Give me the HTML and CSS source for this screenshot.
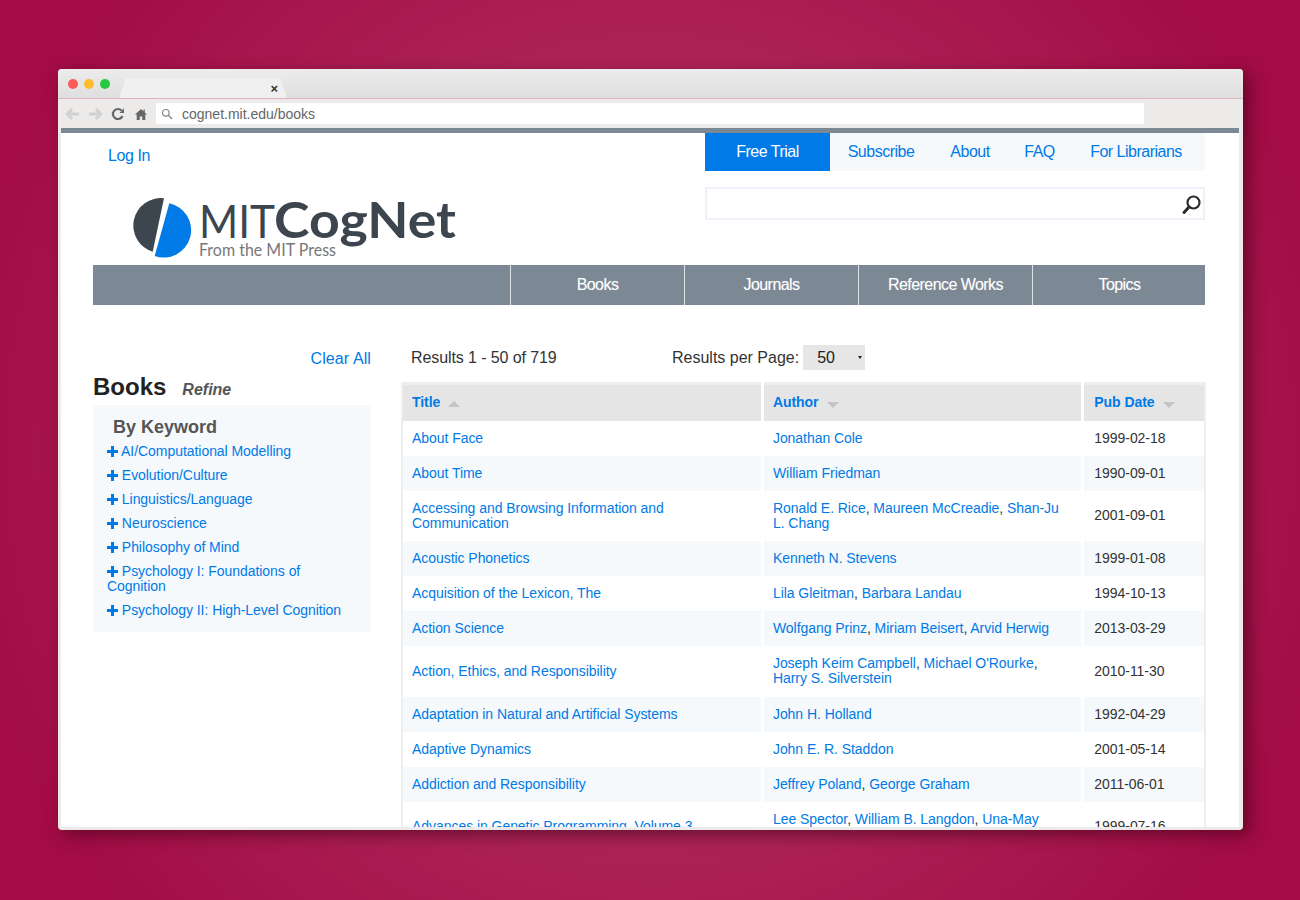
FILE: index.html
```html
<!DOCTYPE html>
<html lang="en">
<head>
    <meta charset="UTF-8">
    <title>MIT CogNet - Books</title>
    <link rel="stylesheet" href="styles.css">
</head>
<body>
    <div class="browser">
        <div class="titlebar">
            <div class="dots">
                <span class="dot dot-red"></span>
                <span class="dot dot-yellow"></span>
                <span class="dot dot-green"></span>
            </div>
            <div class="tab"><span class="tab-close">×</span></div>
        </div>
        <div class="toolbar">
            <svg class="tool" width="16" height="14" viewBox="0 0 16 14"><path d="M7 2 2.500 7 7 12M3 7h11" fill="none" stroke="#d2d2d2" stroke-width="3"/></svg>
            <svg class="tool" width="16" height="14" viewBox="0 0 16 14"><path d="M9 2l4.500 5L9 12M13 7H2" fill="none" stroke="#d2d2d2" stroke-width="3"/></svg>
            <svg class="tool" width="14" height="14" viewBox="0 0 14 14"><path d="M11.500 9A5 5 0 1 1 10.500 3.500" fill="none" stroke="#666" stroke-width="2.200"/><path d="M8.500 6H13V1.200z" fill="#666"/></svg>
            <svg class="tool" width="12" height="12" viewBox="0 0 12 12"><path d="M6 1 0 6.500h1.700V12h3V8.500h2.600V12h3V6.500H12L9.800 4.500V1.500H8.500v1.800z" fill="#666"/></svg>
            <div class="address">
                <svg width="12" height="12" viewBox="0 0 12 12"><circle cx="4.800" cy="4.800" r="3.300" fill="none" stroke="#888" stroke-width="1.200"/><path d="M7.300 7.300 11 11" stroke="#888" stroke-width="1.500"/></svg>
                <span>cognet.mit.edu/books</span>
            </div>
        </div>

        <div class="viewport">
            <header class="site-header">
                <div class="header-left">
                    <a class="login" href="#">Log In</a>
                    <svg class="logo" width="326" height="64" viewBox="0 0 326 64">
                        <path d="M31 1.300 19.700 54.700A27.400 27.400 0 0 1 31 1.300Z" fill="#3d464e"/>
                        <path d="M36.300 6.300 21.700 59A27.400 27.400 0 1 0 36.300 6.300Z" fill="#007ae6"/>
                        <text class="logo-light" x="66" y="41" textLength="76" lengthAdjust="spacingAndGlyphs">MIT</text>
                        <text class="logo-bold" x="141" y="41" textLength="182" lengthAdjust="spacingAndGlyphs">CogNet</text>
                        <text class="logo-sub" x="66" y="59" textLength="137" lengthAdjust="spacingAndGlyphs">From the MIT Press</text>
                    </svg>
                </div>
                <div class="header-right">
                    <nav class="top-nav">
                        <a class="trial" href="#">Free Trial</a>
                        <a class="sub" href="#">Subscribe</a>
                        <a class="about" href="#">About</a>
                        <a class="faq" href="#">FAQ</a>
                        <a class="lib" href="#">For Librarians</a>
                    </nav>
                    <div class="search">
                        <svg width="22" height="22" viewBox="0 0 22 22"><circle cx="12.500" cy="8.500" r="6" fill="none" stroke="#2b2b2b" stroke-width="2.200"/><path d="M8 13 3 18.500" stroke="#2b2b2b" stroke-width="3" stroke-linecap="round"/></svg>
                    </div>
                </div>
            </header>

            <nav class="main-nav">
                <a href="#">Books</a>
                <a href="#">Journals</a>
                <a href="#">Reference Works</a>
                <a href="#">Topics</a>
            </nav>

            <div class="content">
                <aside class="sidebar">
                    <a class="clear" href="#">Clear All</a>
                    <div class="side-title">
                        <h2>Books</h2>
                        <em>Refine</em>
                    </div>
                    <div class="facet">
                        <h3>By Keyword</h3>
                        <ul>
                            <li><a href="#"><svg class="plus" width="11" height="11" viewBox="0 0 11 11"><path d="M4 0h3v4h4v3H7v4H4V7H0V4h4z"/></svg> AI/Computational Modelling</a></li>
                            <li><a href="#"><svg class="plus" width="11" height="11" viewBox="0 0 11 11"><path d="M4 0h3v4h4v3H7v4H4V7H0V4h4z"/></svg> Evolution/Culture</a></li>
                            <li><a href="#"><svg class="plus" width="11" height="11" viewBox="0 0 11 11"><path d="M4 0h3v4h4v3H7v4H4V7H0V4h4z"/></svg> Linguistics/Language</a></li>
                            <li><a href="#"><svg class="plus" width="11" height="11" viewBox="0 0 11 11"><path d="M4 0h3v4h4v3H7v4H4V7H0V4h4z"/></svg> Neuroscience</a></li>
                            <li><a href="#"><svg class="plus" width="11" height="11" viewBox="0 0 11 11"><path d="M4 0h3v4h4v3H7v4H4V7H0V4h4z"/></svg> Philosophy of Mind</a></li>
                            <li><a href="#"><svg class="plus" width="11" height="11" viewBox="0 0 11 11"><path d="M4 0h3v4h4v3H7v4H4V7H0V4h4z"/></svg> Psychology I: Foundations of Cognition</a></li>
                            <li><a href="#"><svg class="plus" width="11" height="11" viewBox="0 0 11 11"><path d="M4 0h3v4h4v3H7v4H4V7H0V4h4z"/></svg> Psychology II: High-Level Cognition</a></li>
                        </ul>
                    </div>
                </aside>

                <section class="results">
                    <div class="results-bar">
                        <span class="count">Results 1 - 50 of 719</span>
                        <span class="per-page">Results per Page:</span>
                        <span class="select">50<i class="caret"></i></span>
                    </div>
                    <table>
                        <colgroup>
                            <col class="col-title">
                            <col class="col-author">
                            <col class="col-date">
                        </colgroup>
                        <thead>
                            <tr>
                                <th><a href="#">Title</a><i class="arrow-up"></i></th>
                                <th><a href="#">Author</a><i class="arrow-down"></i></th>
                                <th><a href="#">Pub Date</a><i class="arrow-down"></i></th>
                            </tr>
                        </thead>
                        <tbody>
                            <tr><td><a href="#">About Face</a></td><td><a href="#">Jonathan Cole</a></td><td>1999-02-18</td></tr>
                            <tr><td><a href="#">About Time</a></td><td><a href="#">William Friedman</a></td><td>1990-09-01</td></tr>
                            <tr><td><a href="#">Accessing and Browsing Information and Communication</a></td><td><a href="#">Ronald E. Rice</a>, <a href="#">Maureen McCreadie</a>, <a href="#">Shan-Ju L. Chang</a></td><td>2001-09-01</td></tr>
                            <tr><td><a href="#">Acoustic Phonetics</a></td><td><a href="#">Kenneth N. Stevens</a></td><td>1999-01-08</td></tr>
                            <tr><td><a href="#">Acquisition of the Lexicon, The</a></td><td><a href="#">Lila Gleitman</a>, <a href="#">Barbara Landau</a></td><td>1994-10-13</td></tr>
                            <tr><td><a href="#">Action Science</a></td><td><a href="#">Wolfgang Prinz</a>, <a href="#">Miriam Beisert</a>, <a href="#">Arvid Herwig</a></td><td>2013-03-29</td></tr>
                            <tr class="row-tall"><td><a href="#">Action, Ethics, and Responsibility</a></td><td><a href="#">Joseph Keim Campbell</a>, <a href="#">Michael O'Rourke</a>, <a href="#">Harry S. Silverstein</a></td><td>2010-11-30</td></tr>
                            <tr><td><a href="#">Adaptation in Natural and Artificial Systems</a></td><td><a href="#">John H. Holland</a></td><td>1992-04-29</td></tr>
                            <tr><td><a href="#">Adaptive Dynamics</a></td><td><a href="#">John E. R. Staddon</a></td><td>2001-05-14</td></tr>
                            <tr><td><a href="#">Addiction and Responsibility</a></td><td><a href="#">Jeffrey Poland</a>, <a href="#">George Graham</a></td><td>2011-06-01</td></tr>
                            <tr><td><a href="#">Advances in Genetic Programming, Volume 3</a></td><td><a href="#">Lee Spector</a>, <a href="#">William B. Langdon</a>, <a href="#">Una-May O'Reilly</a></td><td>1999-07-16</td></tr>
                        </tbody>
                    </table>
                </section>
            </div>
        </div>
    </div>
</body>
</html>
```

FILE: styles.css
```css
* {
    box-sizing: border-box;
}

body {
    margin: 0;
    height: 900px;
    padding: 69px 57px 70px 58px;
    overflow: hidden;
    font-family: 'Liberation Sans', Arial, sans-serif;
    background: radial-gradient(circle 700px at 650px 450px, #b42d5e 0%, #ae2658 50%, #a30c45 100%);
}

a {
    color: #007ae6;
    text-decoration: none;
}

/* browser frame */
.browser {
    display: flex;
    flex-direction: column;
    height: 761px;
    background: #ecebea;
    border-radius: 4px;
    overflow: hidden;
    box-shadow: 6px 5px 16px rgba(50, 0, 20, 0.55);
}

.titlebar {
    display: flex;
    flex: none;
    height: 30px;
    background: linear-gradient(#ececec, #dfdfdf);
    border-bottom: 1px solid #d8b5bf;
}

.dots {
    display: flex;
    gap: 6px;
    padding: 10px 0 0 10px;
}

.dot {
    width: 10px;
    height: 10px;
    border-radius: 50%;
}

.dot-red { background: #fc5b57; }
.dot-yellow { background: #fdbc2e; }
.dot-green { background: #28c940; }

.tab {
    display: flex;
    justify-content: flex-end;
    align-items: center;
    width: 168px;
    height: 20px;
    margin: 9px 0 0 9px;
    padding-right: 9px;
    background: #f0f0f0;
    clip-path: polygon(7px 0, 161px 0, 168px 100%, 0 100%);
}

.tab-close {
    font-size: 13px;
    font-weight: bold;
    color: #333;
}

.toolbar {
    display: flex;
    flex: none;
    align-items: center;
    height: 29px;
    padding: 0 99px 0 7px;
}

.tool:nth-child(1) { margin-right: 6px; }
.tool:nth-child(2) { margin-right: 8px; }
.tool:nth-child(3) { margin-right: 10px; }

.address {
    display: flex;
    align-items: center;
    flex: 1;
    gap: 9px;
    height: 21px;
    margin-left: 9px;
    padding-left: 5px;
    background: #fff;
    border-radius: 2px;
    color: #666;
    font-size: 14px;
}

/* page inside the browser */
.viewport {
    flex: 1;
    min-height: 0;
    margin: 0 4px 3px 3px;
    padding: 0 34px 0 32px;
    overflow: hidden;
    background: #fff;
    border-top: 5px solid #7c8995;
}

.site-header {
    display: flex;
    justify-content: space-between;
    height: 132px;
}

.header-left {
    width: 400px;
}

.login {
    display: block;
    padding: 14px 0 0 15px;
    font-size: 16px;
    line-height: 18px;
    letter-spacing: -0.4px;
}

.logo {
    display: block;
    margin: 32px 0 0 40px;
}

.logo-light {
    font-family: 'Lato', sans-serif;
    font-size: 46px;
    font-weight: 400;
    fill: #3d464e;
}

.logo-bold {
    font-family: 'Lato', sans-serif;
    font-size: 50px;
    font-weight: 700;
    fill: #3d464e;
}

.logo-sub {
    font-family: 'Lato', sans-serif;
    font-size: 17px;
    font-weight: 400;
    fill: #777;
}

.header-right {
    width: 500px;
}

.top-nav {
    display: flex;
    height: 38px;
    background: #f5f9fc;
}

.top-nav a {
    display: flex;
    align-items: center;
    justify-content: center;
    font-size: 16px;
    letter-spacing: -0.5px;
}

.top-nav .trial {
    width: 125px;
    background: #007ae6;
    color: #fff;
}

.top-nav .sub { width: 102px; }
.top-nav .about { width: 76px; }
.top-nav .faq { width: 65px; padding-right: 2px; }
.top-nav .lib { width: 132px; padding-right: 6px; }

.search {
    display: flex;
    justify-content: flex-end;
    align-items: center;
    height: 33px;
    margin-top: 16px;
    padding-top: 2px;
    border: 2px solid #f0f0f8;
}

.main-nav {
    display: grid;
    grid-template-columns: repeat(4, 174px);
    height: 40px;
    padding-left: 417px;
    background: #7c8995;
}

.main-nav a {
    display: flex;
    align-items: center;
    justify-content: center;
    border-left: 1px solid #dfe3e6;
    color: #fff;
    font-size: 16px;
    letter-spacing: -0.55px;
    text-shadow: 0 0 1px rgba(255, 255, 255, 0.3);
}

.content {
    display: flex;
    gap: 30px;
    padding-top: 40px;
}

/* sidebar */
.sidebar {
    flex: none;
    width: 278px;
}

.clear {
    display: block;
    padding-top: 1px;
    text-align: right;
    font-size: 16px;
    line-height: 26px;
    letter-spacing: 0.1px;
}

.side-title {
    display: flex;
    align-items: baseline;
    gap: 16px;
    height: 33px;
}

.side-title h2 {
    margin: 0;
    font-size: 24px;
    line-height: 30px;
    color: #222;
}

.side-title em {
    font-size: 16px;
    font-weight: bold;
    color: #555;
}

.facet {
    height: 227px;
    padding: 12px 14px 0;
    background: #f5f9fc;
}

.facet h3 {
    margin: 0 0 6px 6px;
    font-size: 18px;
    line-height: 21px;
    color: #555;
}

.facet ul {
    margin: 0;
    padding: 0;
    list-style: none;
}

.facet li {
    margin-bottom: 9px;
    font-size: 14px;
    line-height: 15px;
    letter-spacing: -0.05px;
}

.plus {
    fill: #007ae6;
    vertical-align: -0.5px;
}

/* results */
.results {
    flex: none;
    width: 804px;
}

.results-bar {
    display: flex;
    align-items: center;
    height: 26px;
    padding-left: 10px;
    font-size: 16px;
    color: #333;
}

.count {
    width: 261px;
    letter-spacing: -0.1px;
}

.select {
    display: flex;
    align-items: center;
    align-self: flex-start;
    width: 62px;
    height: 25px;
    margin-left: 4px;
    padding-left: 14px;
    background: #e6e6e6;
    color: #222;
}

.caret {
    margin-left: 23px;
    border-left: 2.5px solid transparent;
    border-right: 2.5px solid transparent;
    border-top: 3px solid #222;
}

table {
    width: 805px;
    margin-top: 11px;
    border-top: 3px solid #eeeeee;
    border-left: 2px solid #eeeeee;
    border-right: 2px solid #eeeeee;
    border-collapse: collapse;
    table-layout: fixed;
    font-size: 14px;
    letter-spacing: -0.05px;
}

.col-title { width: 360px; }
.col-author { width: 320px; }
.col-date { width: 122px; }

th,
td {
    padding: 10px 9px;
    line-height: 15px;
    text-align: left;
    border-left: 3px solid #fff;
    color: #333;
}

th:first-child,
td:first-child {
    border-left: 0;
}

th:last-child,
td:last-child {
    padding-left: 10px;
}

th {
    height: 37px;
    background: #e5e5e5;
    font-weight: bold;
}

.row-tall td {
    height: 51px;
}

tbody tr:nth-child(even) td {
    background: #f5f9fc;
}

.arrow-up,
.arrow-down {
    display: inline-block;
    margin-left: 8px;
    border-left: 6.5px solid transparent;
    border-right: 6.5px solid transparent;
}

.arrow-up {
    border-bottom: 6px solid #c4c4c4;
}

.arrow-down {
    border-top: 6px solid #c4c4c4;
    vertical-align: -1px;
}
```
